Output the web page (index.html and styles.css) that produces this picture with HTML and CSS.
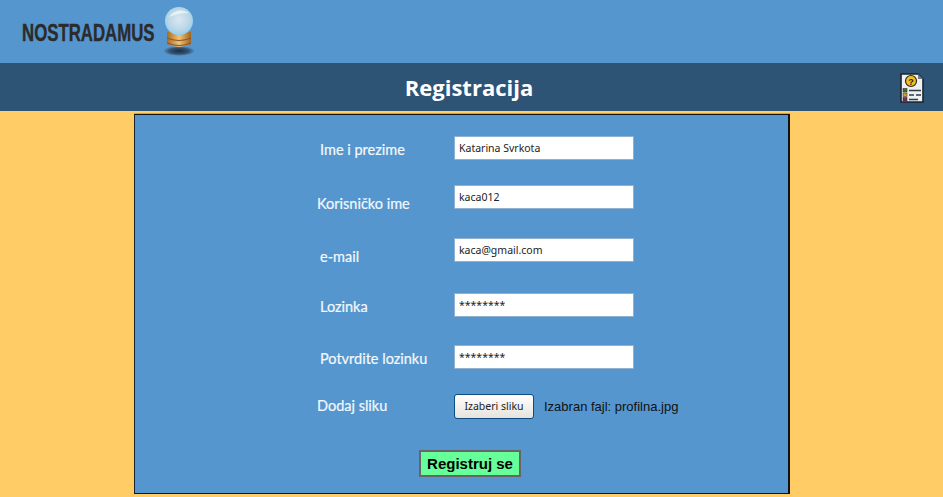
FILE: index.html
```html
<!DOCTYPE html>
<html lang="sr">
<head>
<meta charset="utf-8">
<title>Registracija</title>
<link rel="stylesheet" href="styles.css">
</head>
<body>
<header class="top">
  <div class="logo-box"><span class="logo-text">NOSTRADAMUS</span></div>
  <svg class="ball" width="34" height="58" viewBox="0 0 34 58">
    <defs>
      <radialGradient id="glass" cx="50%" cy="45%" r="55%">
        <stop offset="0" stop-color="#dbe8f0"/>
        <stop offset="0.7" stop-color="#b9d6e6"/>
        <stop offset="1" stop-color="#8fd0ee"/>
      </radialGradient>
      <linearGradient id="gold" x1="0" x2="1" y1="0" y2="0">
        <stop offset="0" stop-color="#a8691f"/>
        <stop offset="0.5" stop-color="#f0c27a"/>
        <stop offset="1" stop-color="#a06420"/>
      </linearGradient>
      <radialGradient id="shade">
        <stop offset="0" stop-color="#1d2c3d"/>
        <stop offset="0.6" stop-color="#2c4660" stop-opacity="0.85"/>
        <stop offset="1" stop-color="#2c4660" stop-opacity="0"/>
      </radialGradient>
    </defs>
    <ellipse cx="17" cy="51" rx="16" ry="5" fill="url(#shade)"/>
    <path d="M5 32h24v12q-12 6-24 0z" fill="url(#gold)"/>
    <path d="M5 38q12 5 24 0M5 43q12 5 24 0" stroke="#8a5418" stroke-width="1" fill="none"/>
    <circle cx="17" cy="21" r="14" fill="url(#glass)"/>
    <path d="M7 17q8-11 20-4q-10 0-20 4z" fill="#eef5f8" opacity="0.8"/>
  </svg>
</header>
<div class="bar">
  <h1 class="title">Registracija</h1>
  <svg class="doc" width="24" height="30" viewBox="0 0 24 30">
    <path d="M1 1h17l5 5v23H1z" fill="#eef1f3" stroke="#18242f" stroke-width="1.600"/>
    <path d="M18 1v5h5z" fill="#6f7c88"/>
    <circle cx="11" cy="8" r="5.500" fill="#f2c11f" stroke="#2e2a1a" stroke-width="1.200"/>
    <text class="doc-q" x="11" y="11.500" text-anchor="middle">?</text>
    <rect x="3" y="15.500" width="4" height="3.500" fill="#4f6b22" stroke="#222" stroke-width="0.500"/>
    <rect x="3" y="20" width="4" height="3.500" fill="#c9a91c" stroke="#222" stroke-width="0.500"/>
    <rect x="3" y="24.500" width="4" height="3.500" fill="#7c2f5e" stroke="#222" stroke-width="0.500"/>
    <path d="M9 17.500h12M9 22h5M16 22h5M9 26.500h9" stroke="#2f3a45" stroke-width="1.400"/>
  </svg>
</div>
<main class="panel">
  <form class="form">
    <div class="row row-1"><label class="label">Ime i prezime</label><input class="field" type="text" value="Katarina Svrkota"></div>
    <div class="row row-2"><label class="label label-out">Korisničko ime</label><input class="field" type="text" value="kaca012"></div>
    <div class="row row-3"><label class="label">e-mail</label><input class="field" type="text" value="kaca@gmail.com"></div>
    <div class="row row-4"><label class="label">Lozinka</label><input class="field" type="text" value="********"></div>
    <div class="row row-5"><label class="label">Potvrdite lozinku</label><input class="field" type="text" value="********"></div>
    <div class="row row-6"><label class="label label-out">Dodaj sliku</label><button class="pick" type="button">Izaberi sliku</button><span class="chosen">Izabran fajl: profilna.jpg</span></div>
    <div class="submit-row"><button class="submit" type="button">Registruj se</button></div>
  </form>
</main>
</body>
</html>
```
FILE: styles.css
```css
* { box-sizing: border-box; }
html, body { margin: 0; height: 497px; overflow: hidden; }
body { background: #ffcc66; font-family: "Liberation Sans", sans-serif; }

.top {
  height: 63px;
  background: #5596cf;
  display: flex;
  align-items: flex-start;
  padding-left: 22px;
}
.logo-box { width: 140px; flex: none; margin-top: 21px; }
.logo-text {
  display: inline-block;
  font-family: "Liberation Sans", sans-serif;
  font-weight: 700;
  font-size: 24px;
  line-height: 24px;
  white-space: nowrap;
  color: #2b2b2b;
  transform: scaleX(0.7);
  transform-origin: left center;
  -webkit-text-stroke: 0.4px #2b2b2b;
}
.ball { flex: none; }

.bar {
  height: 48px;
  background: #2e5475;
  display: grid;
  grid-template-columns: 1fr auto 1fr;
  align-items: center;
  padding-right: 5px;
}
.title {
  grid-column: 2;
  margin: 0;
  font-family: "Open Sans", sans-serif;
  font-weight: 700;
  font-size: 22px;
  color: #fff;
}
.doc { justify-self: end; margin-right: 14px; margin-top: 1px; }
.doc-q { font: 700 9px "Liberation Sans", sans-serif; fill: #222; }

.panel {
  width: 656px;
  height: 380px;
  margin: 3px 0 0 134px;
  background: #5596cf;
  border: 1px solid #1a2530;
  border-top-color: #111;
  border-bottom-color: #111;
  border-right-color: #111;
  border-right-width: 2px;
  box-shadow: 0 -1px 0 #c9a45c;
}
.form {
  display: flex;
  flex-direction: column;
  padding: 21px 0 0 182px;
}
.row { display: flex; align-items: flex-start; height: 24px; }
.row-2 { margin-top: 25px; }
.row-3 { margin-top: 29px; }
.row-4 { margin-top: 31px; }
.row-5 { margin-top: 28px; }
.row-6 { margin-top: 25px; align-items: center; }

.label {
  width: 137px;
  flex: none;
  padding: 5px 0 0 3px;
  font-family: "Lato", sans-serif;
  font-size: 14.5px;
  line-height: 18px;
  color: #f4f8fb;
  -webkit-text-stroke: 0.2px #f4f8fb;
}
.row-2 .label { padding-top: 10px; }
.row-3 .label { padding-top: 10px; }
.row-6 .label { padding-top: 0; }
.row .label-out { padding-left: 0; }

.field {
  width: 180px;
  height: 24px;
  border: 1px solid #8fb0cf;
  background: #fff;
  padding: 0 4px;
  font-family: "Noto Sans", sans-serif;
  font-size: 10.5px;
  color: #222;
  outline: none;
}
.pick {
  width: 80px;
  height: 25px;
  padding: 0;
  border: 1px solid #0f4a80;
  border-radius: 3px;
  background: linear-gradient(#ffffff, #e6e3dc);
  font-family: "Noto Sans", sans-serif;
  font-size: 10.5px;
  color: #222;
}
.chosen { margin-left: 10px; font-size: 13px; color: #111; }

.submit-row { margin-top: 32px; padding-left: 102px; }
.submit {
  width: 102px;
  height: 27px;
  padding: 0;
  background: #66ff99;
  border: 2px solid #666;
  font: 700 15px "Liberation Sans", sans-serif;
  color: #000;
}
```
